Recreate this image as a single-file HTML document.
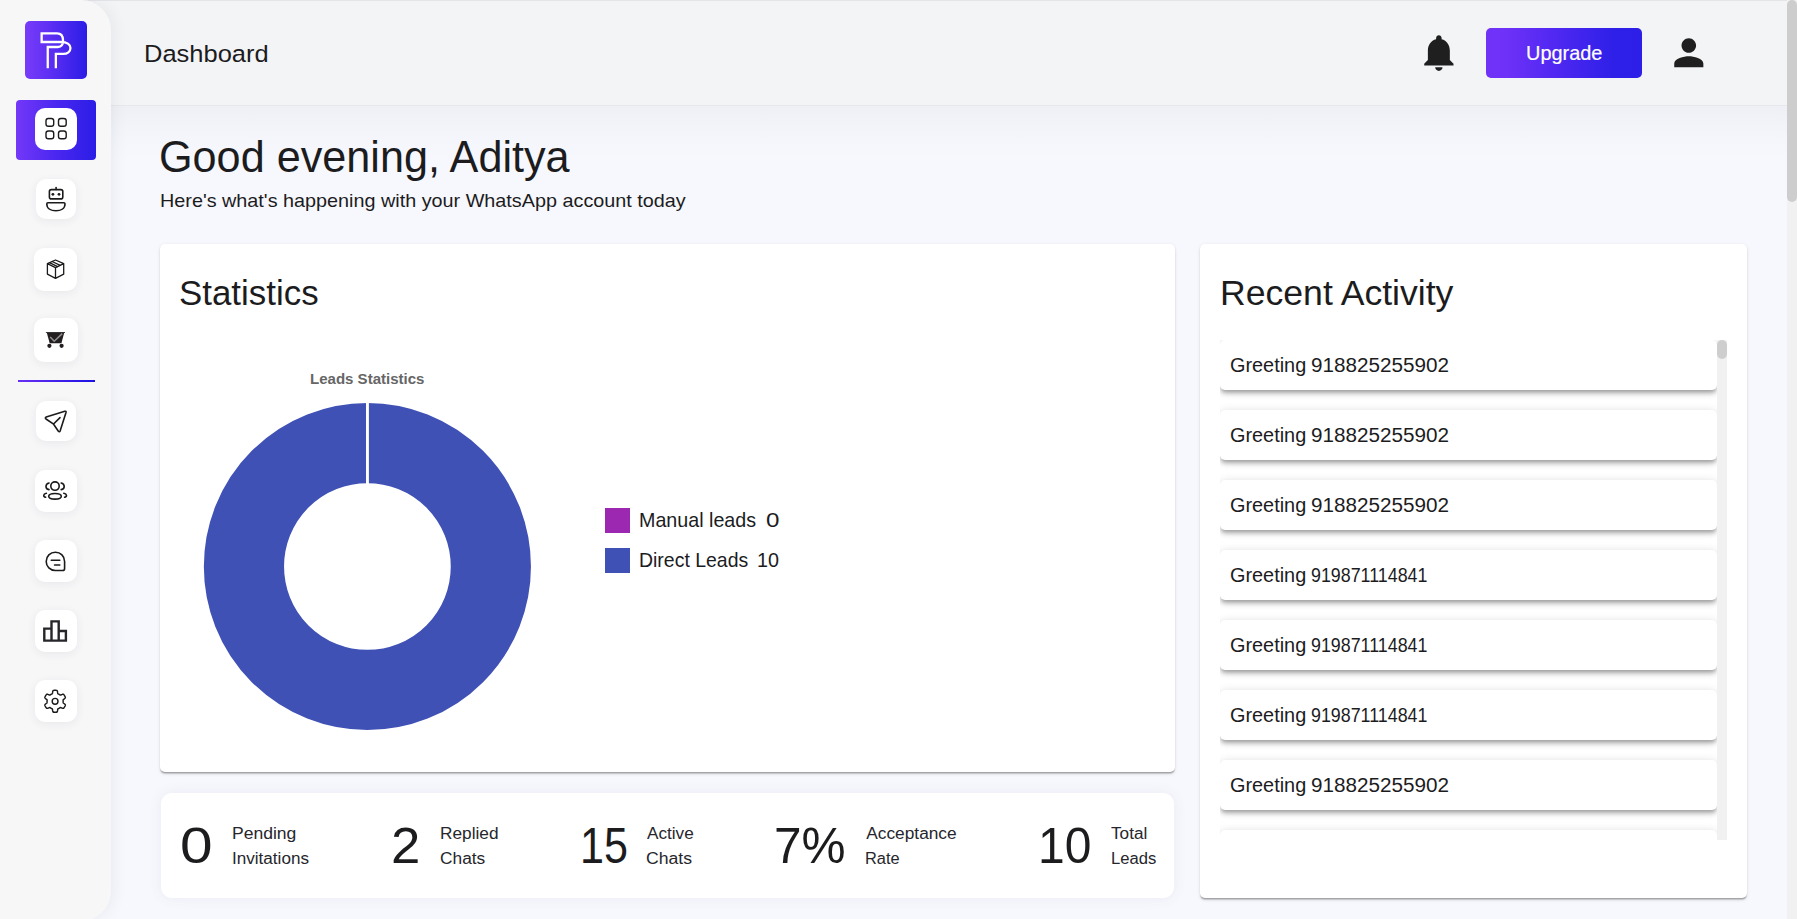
<!DOCTYPE html>
<html lang="en"><head><meta charset="utf-8"><title>Dashboard</title>
<style>
*{box-sizing:border-box;margin:0;padding:0}
html,body{width:1797px;height:919px;overflow:hidden}
body{position:relative;background:#f7f8fd;font-family:"Liberation Sans",sans-serif;color:#1c1c1e}
.abs{position:absolute}
.t{position:absolute;white-space:nowrap;line-height:1;transform-origin:0 50%;display:block}
#topline{left:0;top:0;width:1797px;height:1px;background:#e4e4e8}
#header{left:0;top:0;width:1787px;height:105.5px;background:#f3f4f6;border-bottom:1px solid #e7e8ec}
#hshade{left:0;top:105.5px;width:1787px;height:56px;background:linear-gradient(#eef0f5 0,#f1f3f9 30%,#f4f6fc 60%,rgba(247,248,253,0) 100%)}
#sidebar{left:0;top:0;width:110.8px;height:921px;background:#f7f7f8;border-radius:0 30px 30px 0;box-shadow:3px 0 16px rgba(20,20,40,.055)}
.grad{background:linear-gradient(90deg,#783cf9 0%,#5a2df3 45%,#2b1de6 100%)}
#logo{left:25px;top:21px;width:61.6px;height:58px;border-radius:5px}
#active{left:16px;top:100px;width:80px;height:60px;border-radius:4px;background:linear-gradient(90deg,#7438f8 0%,#4a27f0 50%,#2b1de6 100%)}
.ib{position:absolute;background:#fff;border-radius:10px;box-shadow:0 2px 10px rgba(40,40,70,.07)}
#divider{left:18px;top:380px;width:77px;height:2px;background:linear-gradient(90deg,#6a2ff5,#1a12e2)}
svg{position:absolute;left:0;top:0;overflow:visible}
.card{position:absolute;background:#fff}
#stats{left:160px;top:244px;width:1015px;height:527.6px;border-radius:5px;box-shadow:0 1.9px 1.25px -1.25px rgba(0,0,0,.2),0 1.1px 1.25px 0 rgba(0,0,0,.13),0 1.25px 3.75px 0 rgba(0,0,0,.10)}
#row{left:161px;top:792.6px;width:1013px;height:105.2px;border-radius:11px;box-shadow:0 0 14px rgba(70,80,140,.075)}
#recent{left:1200px;top:244px;width:547px;height:654.3px;border-radius:5px;box-shadow:0 1.9px 1.25px -1.25px rgba(0,0,0,.2),0 1.1px 1.25px 0 rgba(0,0,0,.13),0 1.25px 3.75px 0 rgba(0,0,0,.10)}
#list{left:1220px;top:340px;width:507px;height:500px;overflow:hidden}
.li{position:absolute;left:0;width:497px;height:50px;background:#fff;border-radius:5px;box-shadow:0 3.75px 3.75px -2.5px rgba(0,0,0,.2),0 3.75px 5px 0 rgba(0,0,0,.14),0 1.25px 10px 0 rgba(0,0,0,.12)}
#ltrack{left:497px;top:0;width:10px;height:500px;background:#f1f1f1}
#lthumb{left:497px;top:0;width:10px;height:19px;border-radius:5px;background:#cecece}
#track{left:1787px;top:0;width:10px;height:919px;background:#f1f1f1}
#thumb{left:1787px;top:0;width:10px;height:202px;border-radius:5px;background:#cdcdcd}
#upgrade{left:1486px;top:28px;width:156px;height:50px;border-radius:5px;background:linear-gradient(90deg,#7132f8 0%,#6f31f8 12%,#4f28f1 45%,#2e20e8 82%,#2d1fe8 100%)}
.sq{position:absolute;width:25px;height:25px;left:605px}
</style></head><body>

<div id="header" class="abs"></div>
<div id="hshade" class="abs"></div>
<div id="topline" class="abs"></div>
<div id="sidebar" class="abs"></div>
<div id="logo" class="abs grad"></div>
<div id="active" class="abs"></div>
<div class="ib" style="left:35.00px;top:108px;width:42px;height:42px;box-shadow:none;"></div>
<div class="ib" style="left:36.00px;top:179px;width:40px;height:40px;"></div>
<div class="ib" style="left:34.30px;top:248px;width:42.7px;height:42.5px;"></div>
<div class="ib" style="left:34.00px;top:318px;width:44px;height:44px;"></div>
<div class="ib" style="left:36.00px;top:401px;width:40px;height:40px;"></div>
<div class="ib" style="left:35.00px;top:470px;width:42px;height:42px;"></div>
<div class="ib" style="left:35.00px;top:540px;width:42px;height:42px;"></div>
<div class="ib" style="left:35.00px;top:610px;width:42px;height:42px;"></div>
<div class="ib" style="left:35.00px;top:680px;width:42px;height:42px;"></div>
<div id="divider" class="abs"></div>
<svg width="120" height="919" viewBox="0 0 120 919" fill="none" stroke="#1b1b1d" stroke-width="1.6" stroke-linecap="round" stroke-linejoin="round">
<path d="M47.3,67.8 V46.6 H57.5 C61.3,46.6 62.6,43.6 62.6,40.2 C62.6,35.6 60.3,33 56.6,33 H41.2 V41.6 H60.6 C66.4,41.6 70,44 70,47.6 C70,51.2 67,53.5 62.6,53.5 H55.4 V67.8" stroke="#fff" stroke-width="2.3" transform="translate(0.45,0.4)" stroke-linecap="butt" stroke-linejoin="miter"/>
<rect x="46" y="118.5" width="7.7" height="7.7" rx="2.3" stroke-width="1.4"/>
<rect x="46" y="131" width="7.7" height="7.7" rx="2.3" stroke-width="1.4"/>
<rect x="58.5" y="118.5" width="7.7" height="7.7" rx="2.3" stroke-width="1.4"/>
<rect x="58.5" y="131" width="7.7" height="7.7" rx="2.3" stroke-width="1.4"/>
<rect x="49.4" y="189.6" width="13.4" height="9.3" rx="2"/>
<path d="M56.1,187.6 V189.4"/>
<circle cx="52.9" cy="194.3" r="1.4" fill="#1b1b1d" stroke="none"/><circle cx="59" cy="194.3" r="1.4" fill="#1b1b1d" stroke="none"/>
<path d="M47.9,202.7 H63.9 C64.7,202.7 65,203.1 65,203.9 C65,208.6 60.6,210.7 55.9,210.7 C51.2,210.7 46.8,208.6 46.8,203.9 C46.8,203.1 47.1,202.7 47.9,202.7 Z"/>
<path d="M55.5,260.0 L63.7,263.6 V274.2 L55.5,278.3 L47.4,274.2 V263.6 Z M47.4,263.6 L55.5,267.7 L63.7,263.6 M55.5,267.7 V278.3" stroke-width="1.3"/>
<path d="M52.10,261.51 L60.26,265.32" stroke-width="1.3"/>
<path d="M49.51,262.66 L57.63,266.63" stroke-width="1.3"/>
<path d="M45.9,332.5 H65" stroke="#2a2728" stroke-width="0.9" stroke-linecap="butt"/>
<path d="M46.8,332.8 H64.2 L61.4,343.2 H49.7 Z" fill="#231f20" stroke="none"/>
<circle cx="49.4" cy="345.8" r="2.1" fill="#231f20" stroke="none"/><circle cx="61.6" cy="345.8" r="2.1" fill="#231f20" stroke="none"/>
<path d="M50.2,337 L54.2,341.3 L62.2,333.6" stroke="#8f8f8f" stroke-width="1.5" stroke-linecap="butt" stroke-linejoin="miter"/>
<path d="M46.2,417 L64.8,411.3 Q66.4,410.9 66,412.5 L60.2,430.8 Q59.3,432.6 58.2,431 L53.6,424.2 L46,419 Q44.6,417.7 46.2,417 Z M53.8,423.8 L60,417.6"/>
<circle cx="55" cy="486.1" r="4.2"/><ellipse cx="55" cy="496.3" rx="6.3" ry="2.8"/>
<path d="M49,483 C45,484 45,488.8 49,489.6 M61.2,483 C65.2,484 65.2,488.8 61.2,489.6 M46.4,493.2 C43,494 43,496.6 45.6,497.2 M63.8,493.2 C67.2,494 67.2,496.6 64.6,497.2"/>
<path d="M55.4,552.2 C60.6,552.2 64.6,556.2 64.6,561.4 V568.4 Q64.6,570.5 62.5,570.5 H55.4 C50.2,570.5 46.2,566.5 46.2,561.4 C46.2,556.2 50.2,552.2 55.4,552.2 Z M51.3,560.2 H59.8 M54.6,565 H59.8"/>
<path transform="translate(40.7,616.6) scale(1.2)" d="M16 11V3H8v6H2v12h20V11h-6zm-6-6h4v14h-4V5zm-6 6h4v8H4v-8zm16 8h-4v-6h4v6z" fill="#26262b" stroke="none"/>
<path d="M63.15,701.30 L63.15,701.16 L63.15,701.02 L63.14,700.88 L63.13,700.74 L63.12,700.60 L63.11,700.46 L63.09,700.32 L63.07,700.18 L63.06,700.04 L63.10,699.89 L63.21,699.72 L63.41,699.53 L63.66,699.32 L63.97,699.09 L64.30,698.83 L64.62,698.57 L64.91,698.30 L65.14,698.04 L65.30,697.79 L65.37,697.56 L65.36,697.36 L65.30,697.18 L65.23,697.00 L65.15,696.83 L65.07,696.65 L64.99,696.48 L64.90,696.31 L64.81,696.14 L64.72,695.97 L64.63,695.80 L64.53,695.63 L64.43,695.47 L64.33,695.31 L64.22,695.15 L64.11,694.99 L64.00,694.83 L63.88,694.68 L63.77,694.53 L63.64,694.38 L63.47,694.28 L63.24,694.23 L62.95,694.23 L62.60,694.30 L62.23,694.42 L61.84,694.56 L61.45,694.72 L61.09,694.87 L60.78,694.99 L60.52,695.06 L60.32,695.08 L60.17,695.04 L60.06,694.96 L59.94,694.87 L59.83,694.79 L59.72,694.71 L59.60,694.63 L59.48,694.55 L59.37,694.47 L59.25,694.40 L59.12,694.33 L59.00,694.26 L58.88,694.19 L58.75,694.13 L58.63,694.06 L58.50,694.00 L58.37,693.95 L58.25,693.89 L58.12,693.84 L57.99,693.78 L57.88,693.67 L57.79,693.48 L57.72,693.22 L57.67,692.90 L57.62,692.51 L57.57,692.10 L57.50,691.69 L57.41,691.30 L57.30,690.97 L57.16,690.71 L57.00,690.54 L56.82,690.44 L56.63,690.41 L56.44,690.38 L56.25,690.36 L56.06,690.34 L55.87,690.33 L55.68,690.32 L55.48,690.31 L55.29,690.30 L55.10,690.30 L54.91,690.30 L54.72,690.31 L54.52,690.32 L54.33,690.33 L54.14,690.34 L53.95,690.36 L53.76,690.38 L53.57,690.41 L53.38,690.44 L53.20,690.54 L53.04,690.71 L52.90,690.97 L52.79,691.30 L52.70,691.69 L52.63,692.10 L52.58,692.51 L52.53,692.90 L52.48,693.22 L52.41,693.48 L52.32,693.67 L52.21,693.78 L52.08,693.84 L51.95,693.89 L51.83,693.95 L51.70,694.00 L51.57,694.06 L51.45,694.13 L51.32,694.19 L51.20,694.26 L51.08,694.33 L50.95,694.40 L50.83,694.47 L50.72,694.55 L50.60,694.63 L50.48,694.71 L50.37,694.79 L50.26,694.87 L50.14,694.96 L50.03,695.04 L49.88,695.08 L49.68,695.06 L49.42,694.99 L49.11,694.87 L48.75,694.72 L48.36,694.56 L47.97,694.42 L47.60,694.30 L47.25,694.23 L46.96,694.23 L46.73,694.28 L46.56,694.38 L46.43,694.53 L46.32,694.68 L46.20,694.83 L46.09,694.99 L45.98,695.15 L45.87,695.31 L45.77,695.47 L45.67,695.63 L45.57,695.80 L45.48,695.97 L45.39,696.14 L45.30,696.31 L45.21,696.48 L45.13,696.65 L45.05,696.83 L44.97,697.00 L44.90,697.18 L44.84,697.36 L44.83,697.56 L44.90,697.79 L45.06,698.04 L45.29,698.30 L45.58,698.57 L45.90,698.83 L46.23,699.09 L46.54,699.32 L46.79,699.53 L46.99,699.72 L47.10,699.89 L47.14,700.04 L47.13,700.18 L47.11,700.32 L47.09,700.46 L47.08,700.60 L47.07,700.74 L47.06,700.88 L47.05,701.02 L47.05,701.16 L47.05,701.30 L47.05,701.44 L47.05,701.58 L47.06,701.72 L47.07,701.86 L47.08,702.00 L47.09,702.14 L47.11,702.28 L47.13,702.42 L47.14,702.56 L47.10,702.71 L46.99,702.88 L46.79,703.07 L46.54,703.28 L46.23,703.51 L45.90,703.77 L45.58,704.03 L45.29,704.30 L45.06,704.56 L44.90,704.81 L44.83,705.04 L44.84,705.24 L44.90,705.42 L44.97,705.60 L45.05,705.77 L45.13,705.95 L45.21,706.12 L45.30,706.29 L45.39,706.46 L45.48,706.63 L45.57,706.80 L45.67,706.97 L45.77,707.13 L45.87,707.29 L45.98,707.45 L46.09,707.61 L46.20,707.77 L46.32,707.92 L46.43,708.07 L46.56,708.22 L46.73,708.32 L46.96,708.37 L47.25,708.37 L47.60,708.30 L47.97,708.18 L48.36,708.04 L48.75,707.88 L49.11,707.73 L49.42,707.61 L49.68,707.54 L49.88,707.52 L50.03,707.56 L50.14,707.64 L50.26,707.73 L50.37,707.81 L50.48,707.89 L50.60,707.97 L50.72,708.05 L50.83,708.13 L50.95,708.20 L51.07,708.27 L51.20,708.34 L51.32,708.41 L51.45,708.47 L51.57,708.54 L51.70,708.60 L51.83,708.65 L51.95,708.71 L52.08,708.76 L52.21,708.82 L52.32,708.93 L52.41,709.12 L52.48,709.38 L52.53,709.70 L52.58,710.09 L52.63,710.50 L52.70,710.91 L52.79,711.30 L52.90,711.63 L53.04,711.89 L53.20,712.06 L53.38,712.16 L53.57,712.19 L53.76,712.22 L53.95,712.24 L54.14,712.26 L54.33,712.27 L54.52,712.28 L54.72,712.29 L54.91,712.30 L55.10,712.30 L55.29,712.30 L55.48,712.29 L55.68,712.28 L55.87,712.27 L56.06,712.26 L56.25,712.24 L56.44,712.22 L56.63,712.19 L56.82,712.16 L57.00,712.06 L57.16,711.89 L57.30,711.63 L57.41,711.30 L57.50,710.91 L57.57,710.50 L57.62,710.09 L57.67,709.70 L57.72,709.38 L57.79,709.12 L57.88,708.93 L57.99,708.82 L58.12,708.76 L58.25,708.71 L58.37,708.65 L58.50,708.60 L58.63,708.54 L58.75,708.47 L58.88,708.41 L59.00,708.34 L59.12,708.27 L59.25,708.20 L59.37,708.13 L59.48,708.05 L59.60,707.97 L59.72,707.89 L59.83,707.81 L59.94,707.73 L60.06,707.64 L60.17,707.56 L60.32,707.52 L60.52,707.54 L60.78,707.61 L61.09,707.73 L61.45,707.88 L61.84,708.04 L62.23,708.18 L62.60,708.30 L62.95,708.37 L63.24,708.37 L63.47,708.32 L63.64,708.22 L63.77,708.07 L63.88,707.92 L64.00,707.77 L64.11,707.61 L64.22,707.45 L64.33,707.29 L64.43,707.13 L64.53,706.97 L64.63,706.80 L64.72,706.63 L64.81,706.46 L64.90,706.29 L64.99,706.12 L65.07,705.95 L65.15,705.77 L65.23,705.60 L65.30,705.42 L65.36,705.24 L65.37,705.04 L65.30,704.81 L65.14,704.56 L64.91,704.30 L64.62,704.03 L64.30,703.77 L63.97,703.51 L63.66,703.28 L63.41,703.07 L63.21,702.88 L63.10,702.71 L63.06,702.56 L63.07,702.42 L63.09,702.28 L63.11,702.14 L63.12,702.00 L63.13,701.86 L63.14,701.72 L63.15,701.58 L63.15,701.44 L63.15,701.30Z" stroke-width="1.45"/><circle cx="55.1" cy="701.3" r="2.9" stroke-width="1.45"/>
</svg>
<span id="t_dash" class="t" style="left:144.32px;top:41.85px;font-size:24.5px;color:#1c1c1e;font-weight:400;transform:scaleX(1.0405);">Dashboard</span>
<div id="upgrade" class="abs"></div>
<span id="t_up" class="t" style="left:1525.80px;top:42.05px;font-size:21px;color:#fff;font-weight:400;transform:scaleX(0.9487);-webkit-text-stroke:0.2px #fff;">Upgrade</span>
<svg width="1797" height="105" viewBox="0 0 1797 105" fill="#1f1f1f">
<path transform="translate(1416.9,30.7) scale(1.83)" d="M12 22c1.1 0 2-.9 2-2h-4c0 1.1.89 2 2 2zm6-6v-5c0-3.07-1.64-5.64-4.500-6.320V4c0-.83-.67-1.500-1.500-1.500s-1.500.67-1.500 1.500v.68C7.630 5.360 6 7.920 6 11v5l-2 2v1h16v-1l-2-2z"/>
<path transform="translate(1666.96,30.86) scale(1.82)" d="M12 12c2.21 0 4-1.79 4-4s-1.79-4-4-4-4 1.79-4 4 1.79 4 4 4zm0 2c-2.67 0-8 1.340-8 4v2h16v-2c0-2.660-5.330-4-8-4z"/>
</svg>
<span id="t_good" class="t" style="left:159.24px;top:135.30px;font-size:44px;color:#1c1c1e;font-weight:400;transform:scaleX(0.9817);">Good evening, Aditya</span>
<span id="t_sub" class="t" style="left:159.84px;top:190.69px;font-size:19px;color:#1c1c1e;font-weight:400;transform:scaleX(1.0416);">Here's what's happening with your WhatsApp account today</span>
<div id="stats" class="card"></div><div id="row" class="card"></div><div id="recent" class="card"></div>
<span id="t_stat" class="t" style="left:178.63px;top:276.05px;font-size:35.5px;color:#1c1c1e;font-weight:400;transform:scaleX(0.9827);">Statistics</span>
<span id="t_rec" class="t" style="left:1220.09px;top:276.05px;font-size:35.5px;color:#1c1c1e;font-weight:400;transform:scaleX(1.0026);">Recent Activity</span>
<span id="t_leads" class="t" style="left:309.80px;top:370.82px;font-size:15px;color:#666;font-weight:700;transform:scaleX(1.0018);">Leads Statistics</span>
<svg width="1797" height="919" viewBox="0 0 1797 919">
<circle cx="367.4" cy="566.5" r="123.45" fill="none" stroke="#3f51b5" stroke-width="80.2"/>
<rect x="366" y="402" width="2.9" height="83" fill="#fff"/>
</svg>
<div class="sq" style="top:508px;background:#9c27b0"></div><div class="sq" style="top:548px;background:#3f51b5"></div>
<span id="t_l1" class="t" style="left:639.34px;top:510.46px;font-size:20.3px;color:#1c1c1e;font-weight:400;transform:scaleX(0.9703);">Manual leads</span>
<span id="t_l1n" class="t" style="left:765.70px;top:510.46px;font-size:20.3px;color:#1c1c1e;font-weight:400;transform:scaleX(1.1900);">0</span>
<span id="t_l2" class="t" style="left:639.36px;top:550.06px;font-size:20.3px;color:#1c1c1e;font-weight:400;transform:scaleX(0.9589);">Direct Leads</span>
<span id="t_l2n" class="t" style="left:757.24px;top:550.06px;font-size:20.3px;color:#1c1c1e;font-weight:400;transform:scaleX(0.9750);">10</span>
<span id="t_n0" class="t" style="left:180.38px;top:821.05px;font-size:50.5px;color:#1c1c1e;font-weight:400;transform:scaleX(1.1600);">0</span>
<span id="t_n1" class="t" style="left:391.47px;top:821.05px;font-size:50.5px;color:#1c1c1e;font-weight:400;transform:scaleX(1.0435);">2</span>
<span id="t_n2" class="t" style="left:579.51px;top:821.05px;font-size:50.5px;color:#1c1c1e;font-weight:400;transform:scaleX(0.8540);">15</span>
<span id="t_n3" class="t" style="left:774.05px;top:821.05px;font-size:50.5px;color:#1c1c1e;font-weight:400;transform:scaleX(0.9812);">7%</span>
<span id="t_n4" class="t" style="left:1037.80px;top:821.05px;font-size:50.5px;color:#1c1c1e;font-weight:400;transform:scaleX(0.9500);">10</span>
<span id="t_a0" class="t" style="left:231.97px;top:825.19px;font-size:17.3px;color:#26262c;font-weight:400;transform:scaleX(1.0148);">Pending</span>
<span id="t_b0" class="t" style="left:232.02px;top:850.19px;font-size:17.3px;color:#26262c;font-weight:400;transform:scaleX(0.9895);">Invitations</span>
<span id="t_a1" class="t" style="left:439.90px;top:825.31px;font-size:17.3px;color:#26262c;font-weight:400;transform:scaleX(0.9982);">Replied</span>
<span id="t_b1" class="t" style="left:439.90px;top:850.31px;font-size:17.3px;color:#26262c;font-weight:400;transform:scaleX(1.0023);">Chats</span>
<span id="t_a2" class="t" style="left:646.60px;top:825.31px;font-size:17.3px;color:#26262c;font-weight:400;transform:scaleX(0.9935);">Active</span>
<span id="t_b2" class="t" style="left:645.57px;top:850.31px;font-size:17.3px;color:#26262c;font-weight:400;transform:scaleX(1.0209);">Chats</span>
<span id="t_a3" class="t" style="left:866.30px;top:825.19px;font-size:17.3px;color:#26262c;font-weight:400;transform:scaleX(1.0000);">Acceptance</span>
<span id="t_b3" class="t" style="left:865.35px;top:850.19px;font-size:17.3px;color:#26262c;font-weight:400;transform:scaleX(0.9486);">Rate</span>
<span id="t_a4" class="t" style="left:1110.80px;top:825.24px;font-size:17.3px;color:#26262c;font-weight:400;transform:scaleX(0.9943);">Total</span>
<span id="t_b4" class="t" style="left:1110.76px;top:850.24px;font-size:17.3px;color:#26262c;font-weight:400;transform:scaleX(0.9622);">Leads</span>
<div id="list" class="abs">
<div class="li" style="top:0px"></div>
<div class="li" style="top:70px"></div>
<div class="li" style="top:140px"></div>
<div class="li" style="top:210px"></div>
<div class="li" style="top:280px"></div>
<div class="li" style="top:350px"></div>
<div class="li" style="top:420px"></div>
<div class="li" style="top:490px"></div>
<div id="ltrack" class="abs"></div><div id="lthumb" class="abs"></div>
</div>
<span id="t_gw0" class="t" style="left:1229.51px;top:354.61px;font-size:20px;color:#1c1c1e;font-weight:400;transform:scaleX(0.9932);">Greeting</span>
<span id="t_gn0" class="t" style="left:1311.27px;top:354.62px;font-size:20px;color:#1c1c1e;font-weight:400;transform:scaleX(1.0344);">918825255902</span>
<span id="t_gw1" class="t" style="left:1229.51px;top:424.61px;font-size:20px;color:#1c1c1e;font-weight:400;transform:scaleX(0.9932);">Greeting</span>
<span id="t_gn1" class="t" style="left:1311.27px;top:424.62px;font-size:20px;color:#1c1c1e;font-weight:400;transform:scaleX(1.0344);">918825255902</span>
<span id="t_gw2" class="t" style="left:1229.51px;top:494.61px;font-size:20px;color:#1c1c1e;font-weight:400;transform:scaleX(0.9932);">Greeting</span>
<span id="t_gn2" class="t" style="left:1311.27px;top:494.62px;font-size:20px;color:#1c1c1e;font-weight:400;transform:scaleX(1.0344);">918825255902</span>
<span id="t_gw3" class="t" style="left:1229.51px;top:564.61px;font-size:20px;color:#1c1c1e;font-weight:400;transform:scaleX(0.9932);">Greeting</span>
<span id="t_gn3" class="t" style="left:1311.11px;top:564.62px;font-size:20px;color:#1c1c1e;font-weight:400;transform:scaleX(0.8922);">919871114841</span>
<span id="t_gw4" class="t" style="left:1229.51px;top:634.61px;font-size:20px;color:#1c1c1e;font-weight:400;transform:scaleX(0.9932);">Greeting</span>
<span id="t_gn4" class="t" style="left:1311.11px;top:634.62px;font-size:20px;color:#1c1c1e;font-weight:400;transform:scaleX(0.8922);">919871114841</span>
<span id="t_gw5" class="t" style="left:1229.51px;top:704.61px;font-size:20px;color:#1c1c1e;font-weight:400;transform:scaleX(0.9932);">Greeting</span>
<span id="t_gn5" class="t" style="left:1311.11px;top:704.62px;font-size:20px;color:#1c1c1e;font-weight:400;transform:scaleX(0.8922);">919871114841</span>
<span id="t_gw6" class="t" style="left:1229.51px;top:774.61px;font-size:20px;color:#1c1c1e;font-weight:400;transform:scaleX(0.9932);">Greeting</span>
<span id="t_gn6" class="t" style="left:1311.27px;top:774.62px;font-size:20px;color:#1c1c1e;font-weight:400;transform:scaleX(1.0344);">918825255902</span>
<div id="track" class="abs"></div><div id="thumb" class="abs"></div>
</body></html>
